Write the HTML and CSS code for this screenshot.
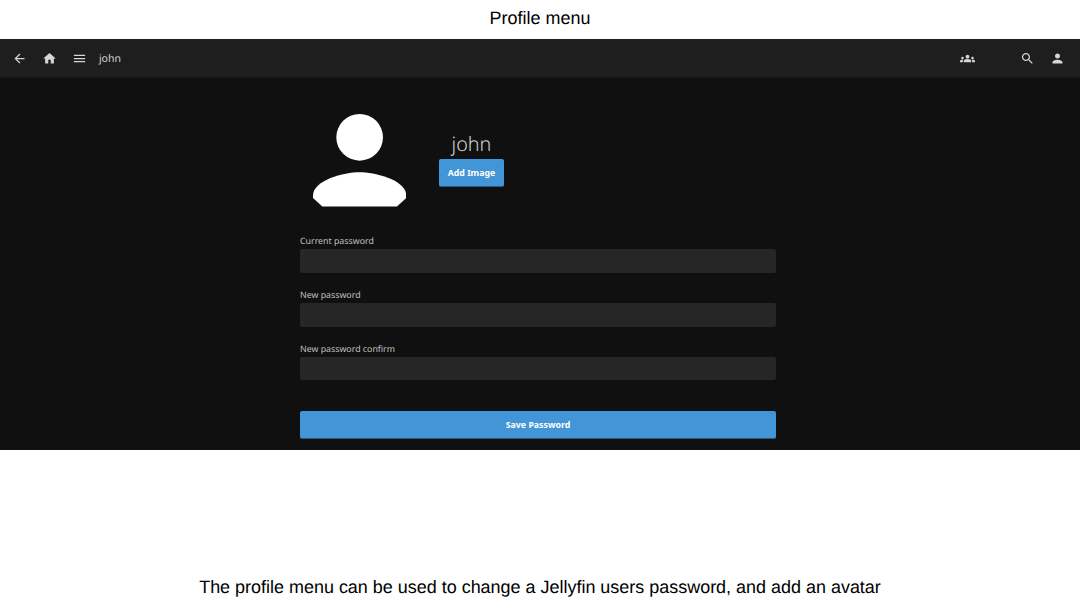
FILE: index.html
```html
<!DOCTYPE html>
<html lang="en">
<head>
<meta charset="utf-8">
<title>Profile menu</title>
<link rel="stylesheet" href="styles.css">
</head>
<body>
<h1 class="title">Profile menu</h1>
<main class="app">
  <header class="bar">
    <svg class="icon" viewBox="0 0 24 24"><path d="M20 11H7.83l5.59-5.59L12 4l-8 8 8 8 1.41-1.41L7.83 13H20v-2z"/></svg>
    <svg class="icon" viewBox="0 0 24 24"><path d="M10 20v-6h4v6h5v-8h3L12 3 2 12h3v8z"/></svg>
    <svg class="icon" viewBox="0 0 24 24"><path d="M3 18h18v-2H3v2zm0-5h18v-2H3v2zm0-7v2h18V6H3z"/></svg>
    <span class="bar-name">john</span>
    <svg class="icon icon-group" viewBox="0 0 24 24"><path d="M12 12.75c1.63 0 3.07.39 4.24.9 1.08.48 1.76 1.56 1.76 2.73V18H6v-1.61c0-1.18.68-2.26 1.76-2.73 1.17-.52 2.61-.91 4.24-.91zM4 13c1.100 0 2-.9 2-2s-.9-2-2-2-2 .9-2 2 .9 2 2 2zm1.130 1.100C4.760 14.040 4.390 14 4 14c-.99 0-1.930.21-2.780.58C.48 14.900 0 15.620 0 16.430V18h4.500v-1.610c0-.83.23-1.610.63-2.290zM20 13c1.100 0 2-.9 2-2s-.9-2-2-2-2 .9-2 2 .9 2 2 2zm4 3.430c0-.81-.48-1.530-1.220-1.850-.85-.37-1.790-.58-2.780-.58-.39 0-.76.04-1.130.1.400.68.630 1.460.630 2.290V18H24v-1.570zM12 6c1.660 0 3 1.340 3 3s-1.340 3-3 3-3-1.340-3-3 1.340-3 3-3z"/></svg>
    <svg class="icon icon-search" viewBox="0 0 24 24"><path d="M15.500 14h-.79l-.28-.27C15.410 12.590 16 11.110 16 9.500 16 5.910 13.090 3 9.500 3S3 5.910 3 9.500 5.910 16 9.500 16c1.610 0 3.090-.59 4.230-1.570l.27.28v.79l5 4.990L20.490 19l-4.990-5zm-6 0C7.010 14 5 11.990 5 9.500S7.010 5 9.500 5 14 7.010 14 9.500 11.990 14 9.500 14z"/></svg>
    <svg class="icon" viewBox="0 0 24 24"><path d="M12 12c2.210 0 4-1.790 4-4s-1.790-4-4-4-4 1.790-4 4 1.790 4 4 4zm0 2c-2.670 0-8 1.340-8 4v2h16v-2c0-2.660-5.330-4-8-4z"/></svg>
  </header>
  <section class="profile">
    <svg class="avatar" viewBox="4 4 16 16"><circle cx="12" cy="8" r="4"/><path d="M12 14c-2.670 0-8 1.340-8 4v.4L5.600 19.870h12.800L20 18.400V18c0-2.660-5.330-4-8-4z"/></svg>
    <div class="identity">
      <h2 class="name">john</h2>
      <button class="button">Add Image</button>
    </div>
  </section>
  <form class="form">
    <label class="field"><span class="label">Current password</span><input class="input" type="password"></label>
    <label class="field"><span class="label">New password</span><input class="input" type="password"></label>
    <label class="field"><span class="label">New password confirm</span><input class="input" type="password"></label>
    <button class="button button-save" type="button">Save Password</button>
  </form>
</main>
<p class="caption">The profile menu can be used to change a Jellyfin users password, and add an avatar</p>
</body>
</html>
```

FILE: styles.css
```css
* { box-sizing: border-box; }
body {
  margin: 0;
  height: 608px;
  display: flex;
  flex-direction: column;
  overflow: hidden;
  background: #fff;
  color: #000;
  font-family: "Liberation Sans", Arial, sans-serif;
  text-rendering: geometricPrecision;
}
.title, .caption {
  margin: 0;
  font-size: 17.970px;
  font-weight: 400;
  text-align: center;
  white-space: nowrap;
}
.title { height: 39px; line-height: 36px; }
.caption { margin-top: auto; height: 42px; line-height: 42px; }
.app {
  height: 411px;
  background: #101010;
  color: #d1d1d1;
  font-family: "Noto Sans", sans-serif;
}
.bar {
  height: 39px;
  display: flex;
  align-items: center;
  padding: 0 15.500px 0 12px;
  gap: 14.800px;
  background: #1e1e1e;
  border-bottom: 1px solid #181818;
}
.icon { width: 15px; height: 15px; flex: none; fill: #d6d6d6; }
.bar-name { margin-left: -2.500px; padding-top: 1px; font-size: 10.500px; line-height: 38px; }
.icon-group { margin-left: auto; }
.icon-search { margin-left: 29.600px; }
.profile { display: flex; padding: 35.500px 0 0 312.700px; }
.avatar { width: 93.300px; height: 93.300px; fill: #fff; }
.identity {
  width: 65px;
  margin: 17.500px 0 0 33px;
  display: flex;
  flex-direction: column;
  align-items: center;
}
.name { margin: 0; height: 28px; font-size: 19.800px; font-weight: 300; line-height: 26px; }
.button {
  width: 65px;
  height: 28px;
  padding: 0;
  border: 0;
  border-bottom: 1px solid #285a82;
  border-radius: 2px;
  background: #4295d6;
  color: #fff;
  font: 700 8.800px/26px "Noto Sans", sans-serif;
  padding-top: 1px;
}
.form { width: 476px; margin: 27.700px 0 0 300px; }
.field { display: block; height: 53.800px; }
.label { display: block; height: 14.800px; font-size: 8.800px; line-height: 15.200px; color: #c0c0c0; }
.input {
  display: block;
  width: 100%;
  height: 23.500px;
  border: 0;
  border-radius: 2px;
  background: #262626;
}
.button-save { display: block; width: 100%; margin-top: 15.100px; }
```
